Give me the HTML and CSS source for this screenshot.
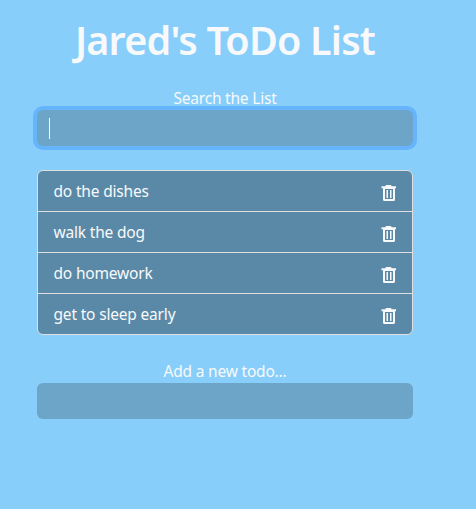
FILE: index.html
```html
<!DOCTYPE html>
<html lang="en">
<head>
<meta charset="utf-8">
<title>Jared's ToDo List</title>
<link rel="stylesheet" href="styles.css">
</head>
<body>
<svg class="sprite" width="0" height="0" aria-hidden="true">
  <symbol id="trash" viewBox="0 0 16 18">
    <path d="M4.500 2V1.500Q4.500 1 5.500 1h4q1 0 1 1v.2H15v2h-1v11.300Q14 17 12.500 17h-9Q2 17 2 15.500V4.200H.5v-2h4zM4 5V15h8V5zM5.500 6H7v8H5.500zM9 6h1.500v8H9z" fill="currentColor" fill-rule="evenodd"/>
  </symbol>
</svg>
<main class="container">
  <h1 class="title">Jared's ToDo List</h1>
  <form class="search">
    <label class="label">Search the List</label>
    <div class="field focused"><span class="caret"></span></div>
  </form>
  <ul class="todos">
    <li class="todo"><span>do the dishes</span><svg class="delete"><use href="#trash"/></svg></li>
    <li class="todo"><span>walk the dog</span><svg class="delete"><use href="#trash"/></svg></li>
    <li class="todo"><span>do homework</span><svg class="delete"><use href="#trash"/></svg></li>
    <li class="todo"><span>get to sleep early</span><svg class="delete"><use href="#trash"/></svg></li>
  </ul>
  <form class="add">
    <label class="label add-label">Add a new todo...</label>
    <div class="field"></div>
  </form>
</main>
</body>
</html>
```
FILE: styles.css
```css
* { box-sizing: border-box; }
body {
  margin: 0;
  min-height: 509px;
  background: #87cefa;
  color: #f8f9fa;
  font: 15.5px/24px "Noto Sans", "Open Sans", sans-serif;
}
.sprite { position: absolute; }
.container { width: 376px; margin-left: 37px; padding-top: 16px; }
.title {
  margin: 0;
  height: 70px;
  font-size: 39.5px;
  line-height: 48px;
  font-weight: 600;
  text-align: center;
  white-space: nowrap;
  letter-spacing: -0.8px;
}
.label {
  display: block;
  height: 24px;
  text-align: center;
  letter-spacing: -0.2px;
}
.field {
  display: flex;
  align-items: center;
  height: 36px;
  padding-left: 12px;
  border-radius: 6px;
  background: #6ca5c8;
}
.focused { box-shadow: 0 0 0 4px #66b5fc; }
.caret { width: 1px; height: 21px; background: #fff; }
.todos {
  list-style: none;
  margin: 24px 0;
  padding: 0;
  border: 1px solid #dfdfdf;
  border-radius: 6px;
  background: #5a89a7;
}
.todo {
  display: flex;
  justify-content: space-between;
  align-items: center;
  height: 40px;
  padding: 0 15px 0 15.5px;
  letter-spacing: -0.18px;
}
.todo + .todo { height: 41px; border-top: 1px solid #dfdfdf; }
.delete { width: 16px; height: 18px; margin-top: 4px; }
```
